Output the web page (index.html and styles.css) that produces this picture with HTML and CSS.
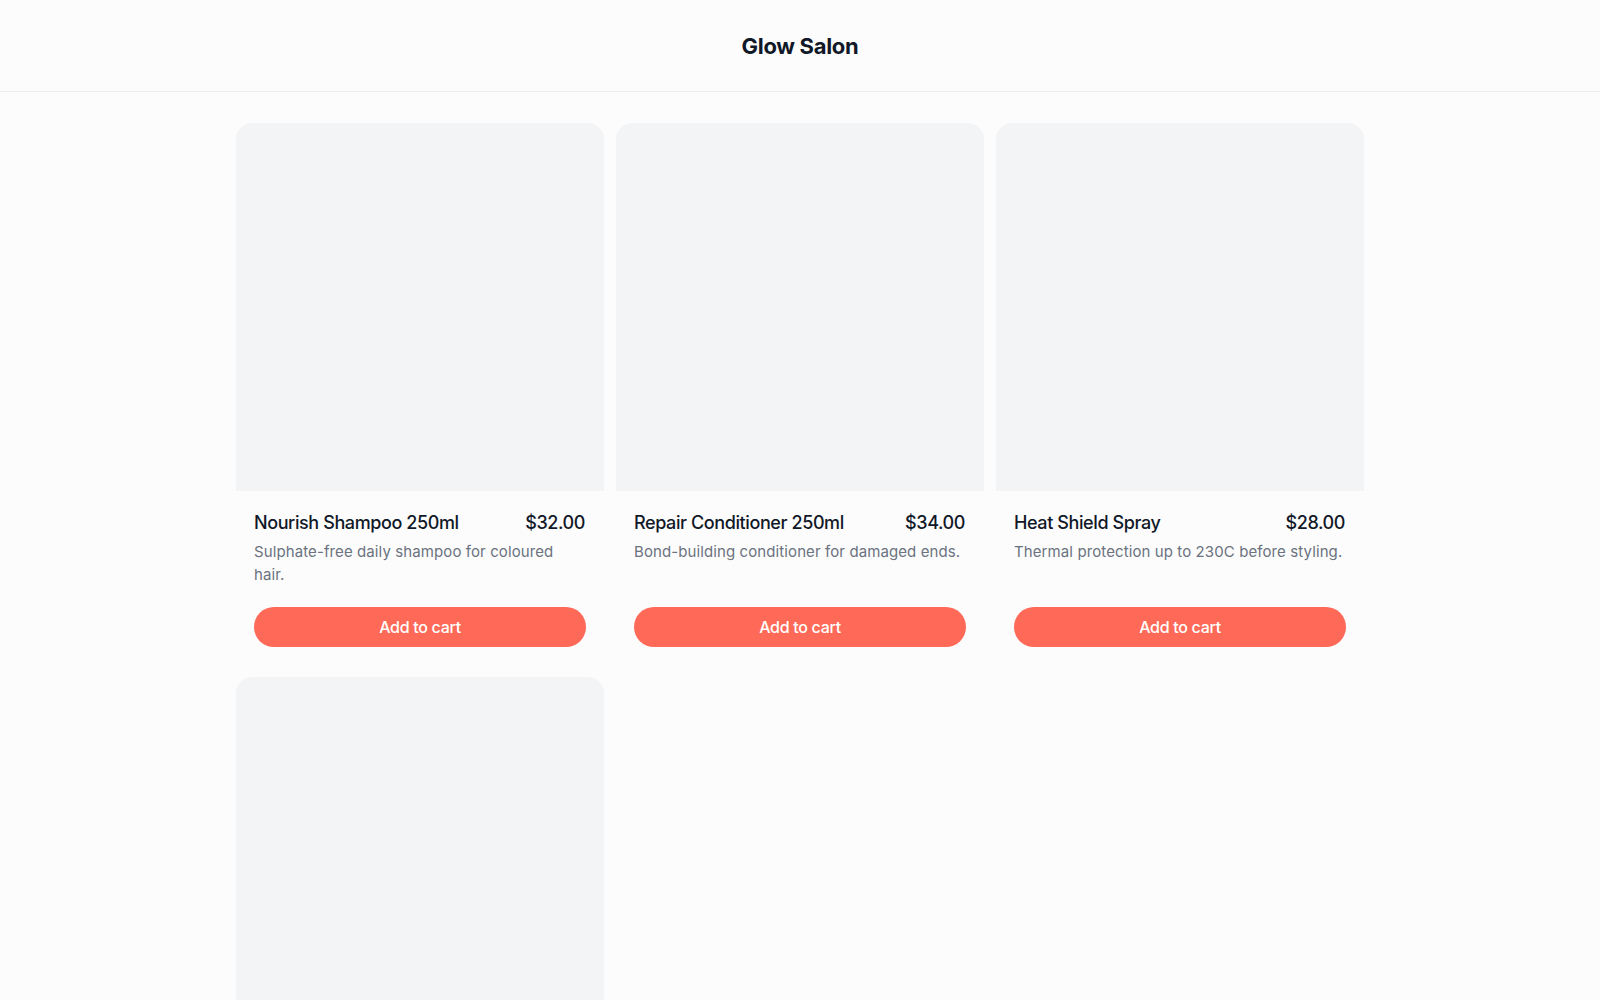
FILE: index.html
```html
<!DOCTYPE html>
<html lang="en">
<head>
<meta charset="utf-8">
<title>Glow Salon</title>
<link rel="stylesheet" href="styles.css">
</head>
<body>
  <header class="site-header">
    <h1 class="site-title">Glow Salon</h1>
  </header>
  <main class="catalog">
    <article class="product">
      <div class="product-media"></div>
      <div class="product-body">
        <div class="product-head">
          <h2 class="product-name">Nourish Shampoo 250ml</h2>
          <span class="product-price">$32.00</span>
        </div>
        <p class="product-desc">Sulphate-free daily shampoo for coloured hair.</p>
        <button class="add-btn" type="button">Add to cart</button>
      </div>
    </article>
    <article class="product">
      <div class="product-media"></div>
      <div class="product-body">
        <div class="product-head">
          <h2 class="product-name">Repair Conditioner 250ml</h2>
          <span class="product-price">$34.00</span>
        </div>
        <p class="product-desc">Bond-building conditioner for damaged ends.</p>
        <button class="add-btn" type="button">Add to cart</button>
      </div>
    </article>
    <article class="product">
      <div class="product-media"></div>
      <div class="product-body">
        <div class="product-head">
          <h2 class="product-name">Heat Shield Spray</h2>
          <span class="product-price">$28.00</span>
        </div>
        <p class="product-desc">Thermal protection up to 230C before styling.</p>
        <button class="add-btn" type="button">Add to cart</button>
      </div>
    </article>
    <article class="product">
      <div class="product-media"></div>
      <div class="product-body">
        <div class="product-head">
          <h2 class="product-name">Curl Defining Cream</h2>
          <span class="product-price">$30.00</span>
        </div>
        <p class="product-desc">Soft hold for defined, frizz-free curls.</p>
        <button class="add-btn" type="button">Add to cart</button>
      </div>
    </article>
  </main>
</body>
</html>
```

FILE: styles.css
```css
* {
  box-sizing: border-box;
}

html, body {
  margin: 0;
  padding: 0;
}

body {
  background: #fcfcfc;
  color: #111827;
  font-family: Inter, "Noto Sans", "Liberation Sans", sans-serif;
}

.site-header {
  height: 92px;
  padding-top: 1px;
  display: flex;
  align-items: center;
  justify-content: center;
  border-bottom: 1px solid #ececee;
}

.site-title {
  margin: 0;
  font-size: 22px;
  font-weight: 700;
  letter-spacing: -0.3px;
  color: #111827;
}

.catalog {
  max-width: 1128px;
  margin: 0 auto;
  padding: 31px 0 32px;
  display: grid;
  grid-template-columns: repeat(3, 1fr);
  gap: 12px;
}

.product {
  display: flex;
  flex-direction: column;
  background: #fcfcfc;
  border-radius: 16px;
  overflow: hidden;
}

.product-media {
  aspect-ratio: 1 / 1;
  background: #f3f4f6;
}

.product-body {
  flex: 1;
  display: flex;
  flex-direction: column;
  padding: 18px;
}

.product-head {
  display: flex;
  justify-content: space-between;
  align-items: baseline;
  gap: 12px;
}

.product-name,
.product-price {
  margin: 0;
  font-size: 18px;
  line-height: 28px;
  font-weight: 500;
  letter-spacing: -0.4px;
  color: #111827;
}

.product-price {
  padding-right: 1px;
}

.product-desc {
  margin: 4px 0 0;
  font-size: 15px;
  line-height: 22.5px;
  letter-spacing: 0.1px;
  color: #6b7280;
  min-height: 45px;
}

.add-btn {
  margin-top: 21px;
  height: 40px;
  border: 0;
  border-radius: 999px;
  background: #ff6a58;
  color: #ffffff;
  font-family: inherit;
  font-size: 16px;
  font-weight: 500;
  letter-spacing: -0.3px;
  cursor: pointer;
}
```
